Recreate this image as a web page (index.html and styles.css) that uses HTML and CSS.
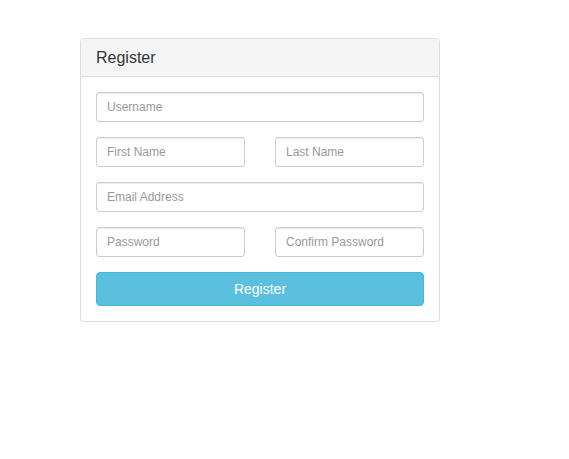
FILE: index.html
```html
<!DOCTYPE html>
<html lang="en">
<head>
<meta charset="utf-8">
<title>Register</title>
<link rel="stylesheet" href="styles.css">
</head>
<body>
<div class="page">
  <div class="panel">
    <div class="panel-heading">
      <h3 class="panel-title">Register</h3>
    </div>
    <form class="panel-body">
      <input class="field" type="text" placeholder="Username">
      <div class="row">
        <input class="field" type="text" placeholder="First Name">
        <input class="field" type="text" placeholder="Last Name">
      </div>
      <input class="field" type="email" placeholder="Email Address">
      <div class="row">
        <input class="field" type="password" placeholder="Password">
        <input class="field" type="password" placeholder="Confirm Password">
      </div>
      <button class="btn" type="button">Register</button>
    </form>
  </div>
</div>
</body>
</html>
```
FILE: styles.css
```css
* { box-sizing: border-box; }
html, body {
  margin: 0;
  padding: 0;
  background: #fff;
  font-family: "Liberation Sans", Arial, sans-serif;
  color: #333;
}
.page {
  padding: 38px 0 0 80px;
}
.panel {
  width: 360px;
  background: #fff;
  border: 1px solid #ddd;
  border-radius: 4px;
  box-shadow: 0 1px 1px rgba(0,0,0,0.05);
}
.panel-heading {
  background: #f5f5f5;
  border-bottom: 1px solid #ddd;
  border-radius: 3px 3px 0 0;
  padding: 10px 15px 9px;
}
.panel-title {
  margin: 0;
  font-size: 16px;
  font-weight: normal;
  line-height: 18px;
  color: #333;
}
.panel-body {
  padding: 15px;
  margin: 0;
  display: flex;
  flex-direction: column;
  gap: 15px;
}
.row {
  display: flex;
  gap: 30px;
}
.row .field {
  flex: 1 1 0;
  min-width: 0;
}
.field {
  display: block;
  width: 100%;
  height: 30px;
  padding: 5px 10px;
  font-family: inherit;
  font-size: 12px;
  line-height: 1.5;
  color: #555;
  background: #fff;
  border: 1px solid #ccc;
  border-radius: 3px;
  box-shadow: inset 0 1px 1px rgba(0,0,0,0.075);
  outline: none;
}
.field::placeholder {
  color: #999;
  opacity: 1;
}
.btn {
  display: block;
  width: 100%;
  height: 34px;
  padding: 6px 12px;
  font-family: inherit;
  font-size: 14px;
  line-height: 20px;
  color: #fff;
  background: #5bc0de;
  border: 1px solid #46b8da;
  border-radius: 4px;
  cursor: pointer;
}
```
